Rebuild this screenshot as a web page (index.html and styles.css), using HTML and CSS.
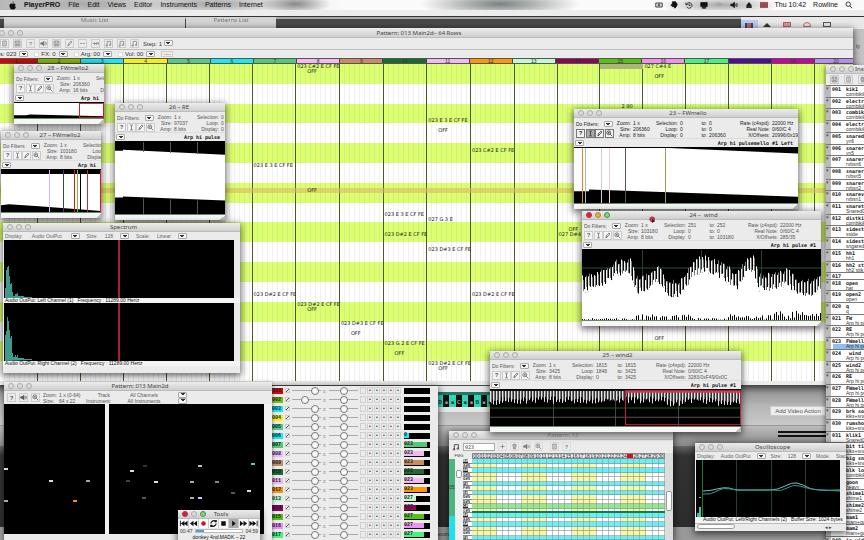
FILE: index.html
```html
<!DOCTYPE html>
<html lang="en">
<head>
<meta charset="utf-8">
<title>PlayerPRO</title>
<link rel="stylesheet" href="styles.css">
</head>
<body>
<svg class="defs" aria-hidden="true">
  <symbol id="i-text" viewBox="0 0 10 10"><path d="M3 1.5h1.5L5 2l.5-.5H7M5 2v6M3 8.500h1.500L5 8l.5.5H7"/></symbol>
  <symbol id="i-pen" viewBox="0 0 10 10"><path d="M2.500 8.500l1-3 3.500-4 1.500 1.200-3.500 4zM3.500 5.500L5 6.700"/></symbol>
  <symbol id="i-zoom" viewBox="0 0 10 10"><circle cx="4" cy="4" r="2.800"/><path d="M6 6l3 3M2.700 4h2.600M4 2.700v2.600"/></symbol>
  <symbol id="i-spk" viewBox="0 0 10 10"><path fill="currentColor" d="M1 4h2l2.500-2.500v7L3 6H1z"/><path d="M7 3.500q1 1.500 0 3M8.300 2.500q1.600 2.500 0 5"/></symbol>
  <symbol id="i-disk" viewBox="0 0 10 10"><path d="M1.500 1.500h7v7h-7zM3 1.500v3h4v-3M3 8.500v-2h4v2"/></symbol>
  <symbol id="i-page" viewBox="0 0 10 10"><path d="M2.500 1.500h5v7h-5zM4 4h2M4 6h2"/></symbol>
  <symbol id="i-trash" viewBox="0 0 10 10"><path d="M2 3h6M4 3V1.500h2V3M3 3l.5 5.500h3L7 3M5 4.500v3"/></symbol>
  <symbol id="i-dash" viewBox="0 0 10 10"><path d="M1.500 5h3M5.500 5h3"/></symbol>
  <symbol id="i-fwd" viewBox="0 0 10 10"><path d="M1 5h7M3 3l2 2-2 2M6 3l2 2-2 2M9 3v4"/></symbol>
  <symbol id="i-note" viewBox="0 0 10 10"><path d="M3 8V2h5v5"/><circle cx="2.500" cy="8" r="1"/><circle cx="7.300" cy="7" r="1"/></symbol>
  <symbol id="i-plus" viewBox="0 0 10 10"><path d="M5 2v6M2 5h6"/></symbol>
  <symbol id="i-loop" viewBox="0 0 10 10"><path d="M8 3a3.500 3.500 0 0 0-6 2M2 7a3.500 3.500 0 0 0 6-2M8 1v2H6M2 9V7h2"/></symbol>
</svg>

<div class="desktop">
  <header class="menubar">
    <nav>
      <svg class="apple" viewBox="0 0 10 10"><path d="M6.500.3Q6.500 2 5 2.200 5 .8 6.500.3zM8.500 3.500Q7 2.300 5.200 3 3.500 2.200 2 3.500.8 5.500 2.500 8.300 3.500 9.900 5.200 9.100 7 9.900 8 8.300L8.800 7Q6.800 5.500 8.500 3.500z"/></svg>
      <button class="app">PlayerPRO</button><button>File</button><button>Edit</button><button>Views</button><button>Editor</button><button>Instruments</button><button>Patterns</button><button>Internet</button>
    </nav>
    <div class="status">
      <svg viewBox="0 0 10 10"><path d="M1 2.500h8v5H1z"/><circle cx="5" cy="5" r="1.300"/></svg>
      <svg viewBox="0 0 10 10"><path fill="currentColor" d="M3 1h4l2 3-1 3-2 2-1-2H3L1 5l2-1z"/></svg>
      <svg viewBox="0 0 10 10"><path d="M2 4a3.500 3.500 0 1 1 0 3M1 2v2.500h2.500M5 3v2.500h2"/></svg>
      <svg viewBox="0 0 10 10"><path fill="currentColor" d="M1 2h8v5H1zM3 8h4v1H3z"/></svg>
      <svg viewBox="0 0 10 10" class="faint"><path d="M1 4q4-3 8 0M3 6q2-2 4 0"/></svg>
      <svg viewBox="0 0 10 10"><use href="#i-spk"/></svg>
      <svg viewBox="0 0 10 10"><path fill="currentColor" d="M2 5.500L5 2l3 3.500zM2 7h6v1H2z"/></svg>
      <svg viewBox="0 0 10 10" class="flag"><rect y="2" width="10" height="6" fill="#667"/><path d="M0 5h10M5 2v6"/></svg>
      <span>Thu 10:42</span><span>Rowline</span>
      <svg viewBox="0 0 10 10"><circle cx="4" cy="4" r="2.800"/><path d="M6 6l3 3"/></svg>
    </div>
  </header>

  <div class="editor-top">
    <section class="stub music"><h2>Music List</h2></section>
    <section class="stub patterns"><h2>Patterns List</h2></section>
    <div class="modes"><span class="on"><i class="film"></i></span><i class="tri"></i><i class="card"></i><i class="ring"></i><i class="export"></i></div>
  </div>
  <div class="editor-side">ty</div>

  <section class="editor-bottom">
    <div class="band"></div>
    <div class="row"><button>Add Video Action</button></div>
    <div class="lines"><i></i><i></i></div>
    <div class="dark"></div>
    <div class="foot">ecord</div>
  </section>

  <section class="win main">
    <header class="bar"><span class="dots"><i></i><i></i><i></i></span><h2>Pattern: 013 Main2d– 64 Rows</h2></header>
    <div class="tools" id="mainTools"></div>
    <div class="fields">
      <label>s: 023 <select></select></label>
      <label><input type="checkbox">FX: 0 <select></select></label>
      <label><input type="checkbox">Arg: 00 <select></select></label>
      <label><input type="checkbox">Vol: 00 <select></select></label>
      <button class="erase">—</button>
    </div>
    <div class="sheet">
      <div class="heads" id="heads"></div>
      <div class="cells" id="cells"></div>
    </div>
  </section>

  <section class="keys" id="keys"></section>
  <section class="win mixer" id="mixer"></section>
  <div id="samples"></div>

  <section class="win spectrum">
    <header class="bar"><span class="dots"><i></i><i></i><i></i></span><h2>Spectrum</h2></header>
    <div class="opts"><label>Display: <b>Audio OutPut</b><select></select></label><label>Size: <b>128</b><select></select></label><label>Scale: <b>Linear</b><select></select></label></div>
    <svg class="scope" viewBox="0 0 230 58" preserveAspectRatio="none"><path fill="#3f9a8e" d="M1 58V48h1V30h1V27h1v-1h1v10h1v8h1v-1h1v9h1v4h2v-2h2v-1h1v3h6v1h8v1z"/><path stroke="#a82038" stroke-width="2" d="M115 0v58"/></svg>
    <p>Audio OutPut: Left Channel (1) &nbsp; Frequency : 11289.00 Hertz</p>
    <svg class="scope" viewBox="0 0 230 58" preserveAspectRatio="none"><path fill="#3f9a8e" d="M1 58V32h1v-4h1V14h1v4h1v9h1v8h1v-2h1v17h1v4h2v-2h1v2h1v-2h1v3h6v1h8v1z"/><path stroke="#a82038" stroke-width="2" d="M115 0v58"/></svg>
    <p>Audio OutPut: Right Channel (2) &nbsp; Frequency : 11289.00 Hertz</p>
  </section>

  <section class="win roll">
    <header class="bar"><span class="dots"><i></i><i></i><i></i></span><h2>Pattern: 013 Main2d</h2></header>
    <div class="rolltools">
      <button>?</button><button><svg><use href="#i-spk"/></svg></button><button><svg><use href="#i-zoom"/></svg></button>
      <dl><dt>Zoom:</dt><dd>1 x (0-64)</dd><dt>Size:</dt><dd>64 x 22</dd></dl>
      <div class="picks"><label for="trk">Track</label><span>All Channels</span><select id="trk"></select><label for="ins">Instrument:</label><span>All Instruments</span><select id="ins"></select></div>
    </div>
    <div class="panes"><svg id="paneA"></svg><svg id="paneB"></svg></div>
  </section>

  <section class="win transport">
    <header class="bar"><span class="dots live"><i></i><i></i><i></i></span><h2>Tools</h2></header>
    <div class="keysrow">
      <button><svg viewBox="0 0 10 10"><path fill="currentColor" d="M1 2v6h1V2zM6 2L2 5l4 3zM9.500 2l-4 3 4 3z"/></svg></button>
      <button><svg viewBox="0 0 10 10"><path fill="currentColor" d="M5 2L1 5l4 3zM9 2L5 5l4 3z"/></svg></button>
      <button><svg viewBox="0 0 10 10"><circle cx="5" cy="5" r="2.500" fill="#d01030" stroke="none"/></svg></button>
      <button><svg viewBox="0 0 10 10" class="heavy"><use href="#i-loop"/></svg></button>
      <button><svg viewBox="0 0 10 10"><path fill="currentColor" d="M2.500 2.500h5v5h-5z"/></svg></button>
      <button class="down"><svg viewBox="0 0 10 10"><path fill="currentColor" d="M3.500 2l4 3-4 3z"/></svg></button>
      <button><svg viewBox="0 0 10 10"><path fill="currentColor" d="M1 2l4 3-4 3zM5 2l4 3-4 3z"/></svg></button>
      <button><svg viewBox="0 0 10 10"><path fill="currentColor" d="M.500 2l4 3-4 3zM4 2l4 3-4 3zM8.500 2v6h1V2z"/></svg></button>
    </div>
    <div class="time"><span>00:47</span><progress value="17" max="100"></progress><span>04:59</span></div>
    <p>donkey 4nd.MADK – 22</p>
  </section>

  <section class="win steps">
    <header class="bar"><span class="dots"><i></i><i></i><i></i></span><h2>Pattern: 13</h2></header>
    <div class="steptools">
      <svg><use href="#i-note"/></svg><input type="text" value="023" aria-label="Instrument">
      <button><svg><use href="#i-plus"/></svg></button><button><svg><use href="#i-trash"/></svg></button><button><svg><use href="#i-spk"/></svg></button><button><svg><use href="#i-zoom"/></svg></button>
      <button class="gap"><svg><use href="#i-page"/></svg></button><button>?</button>
    </div>
    <div class="stepbody">
      <div class="track"><b>05</b><b></b></div>
      <div class="scroller"><small>FMG</small><i></i></div>
      <div class="piano" id="piano"></div>
      <div class="stepgrid"><div class="nums" id="nums"></div><div class="steprows" id="steprows"></div></div>
      <div class="scroller right"><i></i></div>
    </div>
  </section>
  <div id="front"></div>

  <section class="win insts">
    <header class="bar"><span class="dots"><i></i><i></i><i></i></span><h2>Instruments</h2></header>
    <div class="instools"><button><svg><use href="#i-disk"/></svg></button><button><svg><use href="#i-page"/></svg></button><button><svg><use href="#i-trash"/></svg></button></div>
    <ul id="insts"></ul>
  </section>

  <section class="win osc">
    <header class="bar"><span class="dots"><i></i><i></i><i></i></span><h2>Oscilloscope</h2></header>
    <div class="opts"><label>Display: <b>Audio OutPut</b><select></select></label><label>Size: <b>128</b><select></select></label><label>Mode: <b>Stack</b></label></div>
    <svg class="scope" viewBox="0 0 144 57" preserveAspectRatio="none">
      <path stroke="#2a3c3a" d="M40.500 0v57M75.500 0v57M109.500 0v57"/><path stroke="#1b7a30" d="M6.500 0v57"/>
      <path fill="#2fd0a8" d="M1 57v-4h2v-6h2v10zM3 37h2v1H3z"/>
      <path fill="none" stroke="#8ab8b4" d="M7 31q7 0 14-2t12-1q5 2 11 2h30q8 0 15-4t12-3q7 2 12 5t31 2"/>
      <path fill="none" stroke="#2b9a90" d="M7 34q8 1 14-3t14-2q6 2 14 1h28q8 2 14-2t13-2q6 2 12 3t28 2"/>
    </svg>
    <p>Audio OutPut: Left/Right Channels (2) &nbsp; Buffer Size: 1024 bytes</p>
    <div class="hscroll"><i></i><span>◂ ▸</span></div>
  </section>
  <svg class="cursor" viewBox="0 0 10 10"><circle cx="4" cy="4" r="3.500" fill="#c83050"/><path d="M4 3v6l1.500-1.500h2z"/></svg>
</div>
<script src="app.js"></script>
</body>
</html>
```
FILE: styles.css
```css
* { box-sizing: border-box; margin: 0; padding: 0; }
html, body { height: 100%; }
body { font: 5px/6px "Liberation Sans", sans-serif; color: #333; overflow: hidden; }
button, input, select { font: inherit; color: inherit; border: 0; background: none; appearance: none; }
h2 { font: 6px/8px "Noto Sans", sans-serif; color: #444; white-space: nowrap; }
ul { list-style: none; }
svg { fill: none; stroke: currentColor; display: block; }
.defs { position: absolute; width: 0; height: 0; }
.desktop { position: relative; height: 100vh; overflow: hidden; background: #555; }

.menubar { display: flex; justify-content: space-between; height: 16px; padding: 0 11px 0 7px; font-size: 7px; line-height: 10px; color: #111;
  background: radial-gradient(ellipse 70px 9px at 90px 4px, #9a9a9aaa, #0000), radial-gradient(ellipse 75px 9px at 215px 4px, #999999cc, #0000), radial-gradient(ellipse 36px 10px at 295px 4px, #888, #0000), radial-gradient(ellipse 80px 13px at 500px 4px, #7c8080, #0000), radial-gradient(ellipse 60px 9px at 720px 5px, #aaa, #0000), linear-gradient(90deg, #b8b8b8, #d8d8d8 20%, #fafafa 40%); border-bottom: 6px solid #ececec; }
.menubar nav, .status { display: flex; align-items: center; height: 10px; }
.menubar nav { gap: 8px; }
.menubar nav button { height: 10px; }
.apple { width: 9px; height: 9px; fill: #111; stroke: none; margin-left: 1px; margin-right: -1px; }
.app { font-weight: bold; }
.status { gap: 7px; }
.status svg { width: 8px; height: 8px; }
.status .faint { color: #999; }
.status .flag { color: #c33; }

.editor-top { position: absolute; inset: 16px 0 auto; display: flex; height: 13px; padding-left: 4px; gap: 1px; background: #484848; border-top: 1px solid #333; box-shadow: inset 0 2px #aaa; }
.stub { height: 13px; background: #d4d4d4; text-align: center; overflow: hidden; }
.stub h2 { line-height: 7px; color: #777; }
.music { width: 181px; }
.patterns { width: 90px; }
.modes { margin-left: auto; width: 123px; display: flex; align-items: center; gap: 12px; background: #e8e8e8; padding-top: 3px; color: #556; }
.modes .on { background: #b5cdf0; width: 17px; height: 10px; padding: 3px 4px; }
.modes i { display: block; width: 8px; height: 5px; }
.film { border: solid #446; border-width: 0 2px; background: #b66; }
.tri { border: 4px solid transparent; border-bottom-color: #333; border-top: 0; margin-left: -7px; }
.card { background: #d99; border: 1px solid #a66; }
.ring { border: 1px solid #b66; border-radius: 4px 4px 0 0; }
.export { border: 1px solid #555; }
.editor-side { position: absolute; top: 29px; right: 0; width: 11px; height: 40px; padding: 14px 3px; background: #c4c4c4; }

.editor-bottom { position: absolute; inset: 380px 0 0; display: flex; flex-direction: column; background: #aaa; }
.band { height: 24px; background: linear-gradient(#777, #999 50%, #b0b0b0); }
.editor-bottom .row { height: 22px; padding: 2px 38px; text-align: right; background: linear-gradient(#b4b4b4, #c9c9c9); border-bottom: 1px solid #999; }
.editor-bottom button { background: #eee; border: 1px solid #ccc; width: 56px; height: 10px; font-size: 6px; color: #555; white-space: nowrap; }
.lines { height: 20px; padding: 5px 38px; display: flex; flex-direction: column; align-items: flex-end; gap: 2px; background: linear-gradient(#bbb, #888); }
.lines i { width: 48px; height: 2px; background: #111; }
.dark { flex: 1; background: linear-gradient(#666, #333 12%, #2d2d2d); }
.foot { height: 13px; padding: 4px 438px; background: #999; }

.win { position: absolute; display: flex; flex-direction: column; overflow: hidden; background: #ebebeb; box-shadow: 0 2px 7px 1px #0009; white-space: nowrap; }
.bar { display: flex; flex: none; align-items: center; height: 9px; padding: 0 4px; background: linear-gradient(#ececec, #cfcfcf); border-bottom: 1px solid #bbb; }
.bar h2 { flex: 1; text-align: center; margin-right: 22px; overflow: hidden; }
.dots { display: flex; gap: 3px; width: 26px; }
.dots i { width: 6px; height: 6px; border: 1px solid #aaa; border-radius: 3px; background: #ddd; }
.live i:first-child { background: #d23; border-color: #a34; }
.live i:last-child { background: #7d6; border-color: #585; }
.warm i:nth-child(2) { background: #ea4; border-color: #a83; }
select { flex: none; width: 9px; height: 6px; border: 1px solid #aaa; border-radius: 1px; background: #f5f5f5 conic-gradient(from -45deg at 50% 75%, #333 90deg, #0000 0) center / 4px 3px no-repeat; }
.win button svg { width: 7px; height: 7px; }

.main { left: -5px; right: 11px; top: 28px; height: 357px; }
.main .bar { height: 10px; }
.main .bar h2 { margin-right: 36px; }
.tools { display: flex; align-items: center; gap: 4px; height: 12px; padding-left: 5px; border-bottom: 1px solid #bbb; font-size: 6px; }
.tools button { width: 9px; height: 9px; border: 1px solid #ccc; color: #777; display: grid; place-items: center; }
.fields { display: flex; align-items: center; height: 8px; padding-left: 5px; font-size: 6px; gap: 6px; }
.fields label { display: flex; align-items: center; gap: 3px; }
.fields input { width: 5px; height: 5px; background: #fff; border: 1px solid #ddd; margin-right: -1px; }
.erase { width: 12px; height: 6px; border: 1px solid #ccc; line-height: 4px; color: #c44; }
.sheet { width: calc(100% + 5px); }
.heads, .cells { display: grid; grid-template-columns: repeat(20, 1fr); }
.heads { border-top: 1px solid #555; border-bottom: 1px solid #555; }
.heads span { height: 4px; line-height: 4px; font-size: 5px; text-align: center; border-right: 1px solid #444; }
.cells { grid-template-rows: repeat(64, 1fr); height: 317px; font: 5px/5px "DejaVu Sans", sans-serif; color: #222;
  background: repeating-linear-gradient(#dcff70 0 6.25%, #fff 6.25% 12.5%); }
.cells .col { grid-row: 1 / -1; border-right: 1px solid #4a5a30; background: repeating-linear-gradient(90deg, #0000 0 4px, #7773a01c 4px 5px); }
.cells .play { grid-column: 1 / -1; grid-row: 26; background: #e0b86499; }
.cells .sel { grid-column: 15; grid-row: 1; background: #aab67a; }
.cells span { padding-left: 1px; overflow: visible; }
.cells .off { padding-left: 11px; }

.keys { position: absolute; left: 437px; top: 386px; width: 56px; height: 26px; padding: 6px 0 5px; background: #e6e6e6; display: flex; color: #043; font-weight: bold; }
.keys i { flex: 1; font-style: normal; line-height: 15px; text-align: center; background: #111; color: #999; border-top: 3px solid #276; }
.keys i:nth-child(odd) { background: #32d6b4; color: #033; }

.mixer { left: 265px; top: 386px; width: 173px; height: 170px; padding-left: 7px; }
.mixer .ch { display: flex; align-items: center; flex: none; height: 9px; gap: 2px; }
.mixer .id { width: 11px; height: 6px; font: bold 5px/6px "Liberation Mono", monospace; color: #123; }
.mixer input[type=checkbox] { width: 5px; height: 5px; border: 1px solid #ccc; background: linear-gradient(135deg, #0000 45%, #555 45% 60%, #0000 60%); }
.mixer input[type=range] { width: 29px; height: 8px; background: linear-gradient(#aaa, #aaa) center / 100% 1px no-repeat; }
.mixer input[type=range]::-webkit-slider-thumb { appearance: none; width: 8px; height: 8px; border-radius: 4px; border: 1px solid #777; background: #f8f8f8; }
.mixer .pan { color: #888; width: 4px; }
.mixer .fx { display: flex; gap: 1px; width: 42px; }
.mixer .fx b { width: 6px; height: 7px; border: 1px solid #d0d0d0; line-height: 5px; text-align: center; font-weight: bold; }
.mixer .vu { width: 26px; height: 6px; background: #000; }
.mixer .vu span { display: block; height: 5px; font: bold 5px/5px "Liberation Mono", monospace; color: #222; }

.info { display: grid; grid-template-columns: 38px 15px 18px 25px 18px 7px 20px 39px 40px; column-gap: 2px; padding: 2px 2px 0; height: 20px; color: #555; overflow: hidden; flex: none; line-height: 6px; }
.info > span:nth-of-type(odd) { text-align: right; display: flex; justify-content: flex-end; }
.filters { grid-row: 1 / 4; display: flex; flex-wrap: wrap; align-items: center; justify-content: space-between; width: 38px; height: 18px; }
.filters label { display: flex; gap: 5px; width: 100%; align-items: center; height: 7px; }
.filters button { width: 9px; height: 9px; border: 1px solid #ccc; background: #f4f4f4; font: bold 6px/7px "Liberation Sans", sans-serif; }
.w23 .info { color: #222; }
.w23 .filters button { border-color: #777; }
.w23 .filters button:nth-of-type(2) { background: #aaa; }
.name { display: flex; align-items: center; justify-content: space-between; height: 9px; flex: none; padding: 0 5px 0 1px; font: bold 5px/8px "DejaVu Sans Mono", monospace; color: #111; border-top: 1px solid #ddd; }
.wave { width: 100%; flex: 1; min-height: 0; background: #fff; border-top: 1px solid #000; stroke: none; }
.grow { height: 6px; flex: none; background: linear-gradient(135deg, #0000 50%, #bbb 50%) right / 5px 5px no-repeat #f6f6f6; border-top: 1px solid #686; }
.w28 { left: 14px; top: 64px; width: 90px; height: 60px; }
.w27 { left: 1px; top: 131px; width: 100px; height: 87px; }
.w26 { left: 115px; top: 103px; width: 110px; height: 117px; }
.w23 { left: 574px; top: 109px; width: 224px; height: 100px; }
.w24 { left: 582px; top: 211px; width: 239px; height: 115px; }
.w25 { left: 490px; top: 351px; width: 251px; height: 81px; }
.w26 .bar h2, .w27 .bar h2, .w28 .bar h2 { margin-right: 8px; }

.spectrum { left: 3px; top: 223px; width: 237px; height: 150px; }
.spectrum .scope { width: calc(100% - 7px); height: 58px; }
.opts { display: flex; gap: 7px; height: 8px; flex: none; align-items: center; padding: 0 2px; color: #666; overflow: hidden; }
.opts label { display: flex; align-items: center; gap: 7px; }
.opts b { font-weight: normal; }
.spectrum label:first-child { gap: 9px; }
.scope { background: #000; flex: none; margin-left: 1px; stroke: none; }
.spectrum p, .osc p { height: 5px; line-height: 5px; padding-left: 2px; color: #111; background: #f4f4f4; }

.roll { left: 4px; top: 382px; width: 268px; height: 158px; box-shadow: 0 1px 4px #0008; }
.rolltools { display: flex; align-items: center; gap: 3px; height: 13px; padding-left: 3px; color: #555; }
.rolltools button { width: 9px; height: 9px; border: 1px solid #ccc; display: grid; place-items: center; font-weight: bold; font-size: 6px; }
.rolltools dl { display: grid; grid-template-columns: 16px 24px; }
.picks { display: grid; grid-template-columns: 24px 56px 9px; column-gap: 6px; align-items: center; }
.picks label { text-align: right; }
.picks span { text-align: center; }
.panes { display: flex; gap: 4px; height: 130px; padding-right: 8px; background: #f2f2f2; }
.panes svg { background: #000; height: 130px; stroke: none; }
#paneA { width: 101px; }
#paneB { flex: 1; }

.transport { left: 178px; top: 510px; width: 82px; height: 32px; }
.keysrow { display: flex; height: 9px; padding: 0 1px; color: #111; }
.keysrow button { flex: 1; display: grid; place-items: center; border-right: 1px solid #ccc; background: #fafafa; }
.win .keysrow svg { width: 9px; height: 9px; stroke: none; }
.win .keysrow .heavy { stroke: #111; stroke-width: 1.300; }
.win .keysrow .down { background: #aaa; }
.time { display: flex; justify-content: space-between; padding: 0 2px; height: 6px; align-items: center; }
progress { appearance: none; width: 48px; height: 4px; border: 1px solid #bbb; }
progress::-webkit-progress-bar { background: #fff; }
progress::-webkit-progress-value { background: #4aa0d8; }
.transport p { text-align: center; font-size: 5px; color: #111; }

.steps { left: 449px; top: 431px; width: 224px; height: 109px; }
.steps h2 { color: #999; }
.steptools { display: flex; align-items: center; gap: 3px; height: 13px; padding-left: 3px; flex: none; }
.steptools > svg { width: 8px; height: 8px; }
.steptools input { width: 32px; height: 8px; border: 1px solid #aaa; background: #fff; padding-left: 1px; font-family: "DejaVu Sans Mono", monospace; }
.steptools button { width: 9px; height: 9px; border: 1px solid #ddd; color: #777; display: grid; place-items: center; font-weight: bold; }
.steptools .gap { margin-left: 4px; }
.stepbody { display: flex; flex: 1; min-height: 0; }
.track { width: 6px; display: flex; flex-direction: column; padding-top: 6px; }
.track b { height: 57px; background: #4cb480; font-weight: normal; line-height: 57px; }
.track b + b { flex: 1; background: #20e0e8; }
.scroller { width: 8px; background: #f0f0f0; display: flex; flex-direction: column; align-items: center; }
.scroller small { font-size: 4px; height: 17px; }
.scroller i { width: 6px; height: 8px; border: 1px solid #999; border-radius: 2px; background: #fff; }
.right { margin-left: auto; background: #ddd; }
.right i { margin-top: 38px; height: 20px; }
.piano { width: 9px; padding-top: 6px; display: grid; grid-template-rows: repeat(18, 1fr); font: bold 4px/4px "DejaVu Sans Mono", monospace; }
.piano span { background: #fff; border-bottom: 1px solid #888; overflow: hidden; }
.piano .black { background: linear-gradient(90deg, #222 60%, #fff 60%); color: #fff; }
.stepgrid { flex: 1; display: flex; flex-direction: column; }
.nums { display: grid; grid-template-columns: repeat(31, 1fr); height: 6px; font-size: 5px; overflow: hidden; color: #222; text-align: center; border: 1px solid #888; line-height: 5px; }
.nums .now { background: #d01020; color: #d01020; }
.steprows { flex: 1; display: grid; grid-template-rows: repeat(18, 1fr);
  background: repeating-linear-gradient(90deg, #fbf6a0 0 12.900%, #fff 12.900% 25.800%); }
.steprows i { border-bottom: 1px solid #7a909099; background: repeating-linear-gradient(90deg, #0000 0 calc(3.226% - 1px), #8a9a9a99 calc(3.226% - 1px) 3.226%); }
.steprows .c { background-color: #68f0f4; }
.steprows .g { background-color: #94e88c; }
.steprows .d { border-bottom: 2px solid #108040; }

.osc { left: 695px; top: 443px; width: 151px; height: 88px; }
.osc .scope { width: calc(100% - 7px); height: 57px; }
.osc .opts { gap: 5px; }
.osc .opts label { gap: 6px; }
.osc p { padding-left: 8px; height: 6px; }
.hscroll { display: flex; justify-content: space-between; height: 6px; padding: 0 14px 0 2px; border-top: 1px solid #bbb; }
.hscroll i { width: 38px; border: 1px solid #999; border-radius: 3px; background: #fff; }

.insts { right: 0; top: 65px; bottom: -8px; width: 38px; box-shadow: -1px 1px 5px #0007; }
.insts .bar { padding-right: 0; }
.insts .bar h2 { margin: 0; text-align: left; margin-left: 1px; flex: none; }
.instools { height: 11px; display: flex; align-items: center; padding-left: 4px; gap: 5px; flex: none; }
.instools button { width: 9px; height: 9px; color: #777; border: 1px solid #ccc; }
.insts ul { flex: 1; display: flex; flex-direction: column; background: linear-gradient(90deg, #bbb 5px, #fff 5px); min-height: 0; }
.insts li { flex: 12 1 0; min-height: 0; display: grid; grid-template-columns: 6px 14px 1fr; align-content: start; border-top: 1px solid #777; line-height: 5px; color: #111; }
.insts li.short { flex-grow: 6; }
.insts li::before { content: "▾"; color: #555; }
.insts b { font: bold 5px/6px "DejaVu Sans Mono", monospace; }
.insts small { grid-column: 3; font-size: 5px; line-height: 5px; color: #333; }
.insts .pick small { background: #8fc0f0; margin-left: -13px; padding-left: 13px; }
.cursor { position: absolute; left: 649px; top: 215px; width: 8px; height: 10px; stroke: none; fill: #222; }
```
FILE: app.js
```js
const $ = id => document.getElementById(id);
const ico = n => `<svg><use href="#i-${n}"/></svg>`;

// Main pattern sheet
$('mainTools').innerHTML = ['page', 'disk', '?', 'spk', 'disk', 'pen', 'dash', 'fwd', 'note', 'note', 'note']
  .map(n => `<button>${n === '?' ? n : ico(n)}</button>`).join('') + '<label>Step: 1 <select></select></label>';
const colors = ['#d40808', '#86b808', '#18e8f0', '#f4f010', '#58c888', '#18e8f0', '#54c878', '#f4b8f4', '#c88c64', '#1c6c30',
  '#f4b8f4', '#fc9808', '#c0f8d0', '#8c0458', '#58c010', '#f090f0', '#48f080', '#500c98', '#c8049c', '#b890f0'];
$('heads').innerHTML = colors.map((c, i) => `<span style="background:${c}">${i + 1}</span>`).join('');
const notes = [[8, 1, '023 C#2 E CF FE'], [8, 2], [16, 1, '027 C#4 E'], [16, 3], [15, 9, '&emsp;&emsp;&emsp;&emsp;2 90'],
  [11, 12, '023 E 3 E CF FE'], [11, 14], [12, 18, '023 C#2 E CF FE'], [7, 21, '023 E 3 E CF FE'], [8, 26],
  [10, 31, '023 E 3 E CF FE'], [11, 32, '027 G 3 E'], [14, 34], [14, 35, '027 D#4'], [10, 35, '023 D#2 E CF FE'],
  [11, 38, '023 D#3 E CF FE'], [7, 47, '023 D#2 E CF FE'], [12, 47, '023 D#2 E CF FE'], [8, 49, '023 D#2 E CF FE'], [8, 50],
  [9, 53, '023 D#3 E CF FE'], [9, 55], [16, 56], [10, 57, '023 G 2 E CF FE'], [10, 59], [11, 61, '023 D#2 E CF FE'], [11, 62]];
$('cells').innerHTML = colors.map((c, i) => `<i class="col" style="grid-column:${i + 1}"></i>`).join('') +
  '<i class="play"></i><i class="sel"></i>' +
  notes.map(([c, r, t]) => `<span class="${t ? '' : 'off'}" style="grid-area:${r}/${c}">${t || 'OFF'}</span>`).join('');

$('keys').innerHTML = [...'D■■C■■B■■'].map(k => `<i>${k}</i>`).join('');

// Mixer channels
const vu = { 6: 20, 7: 90, 8: 78, 9: 78, 10: 78, 11: 78, 12: 88, 13: 45, 14: 45, 15: 78, 16: 78, 17: 78 };
$('mixer').innerHTML = colors.slice(0, 17).map((c, i) => {
  const n = i + 1, id = String(n).padStart(3, '0');
  return `<div class="ch"><span class="id" style="background:${c}">${id}</span><input type="checkbox" aria-label="On">
  <input type="range" aria-label="Volume" value="${n === 2 ? 45 : 92}"><span class="pan">≡</span><input type="range" aria-label="Pan" value="52">
  <span class="fx"><b></b><b>•</b><b>•</b><b>•</b><b>•</b><b>•</b></span>
  <span class="vu">${vu[n] ? `<span style="background:${c};width:${vu[n]}%">${n < 7 ? '0' : n < 13 ? '023' : '027'}</span>` : ''}</span></div>`;
}).join('');

// Waveforms
const noise = i => Math.abs(Math.sin(i * 12.9898) * 43758.5) % 1;
const lerp = (pts, x) => {
  const k = pts.findIndex(p => p[0] >= x);
  if (k < 1) return pts[0][1];
  const [a, b] = [pts[k - 1], pts[k]];
  return a[1] + (b[1] - a[1]) * (x - a[0]) / (b[0] - a[0]);
};
const v = (x, c, w = 1, h = 100) => `<rect x="${x}" width="${w}" height="${h}" fill="${c}"/>`;
function windWave() {
  const env = [[0, 26], [20, 18], [34, 9], [48, 8], [54, 26], [62, 26], [75, 14], [86, 30], [96, 30], [104, 20], [112, 7], [125, 5], [140, 12],
    [155, 22], [165, 6], [171, 4], [177, 24], [195, 22], [205, 18], [215, 28], [230, 30], [239, 22]];
  let s = '<rect width="239" height="72"/>' + v(60, '#243') + v(119, '#243') + v(179, '#243') + '<path fill="#253" d="M0 18h239v1H0z"/>';
  for (let x = 0; x < 239; x++) {
    const top = lerp(env, x), tip = top + noise(x) * 6, base = top + 12 + noise(x + 7) * 7;
    s += `<rect x="${x}" y="${base}" width="1" height="${72 - base}" fill="#fff"/>`;
    if (x % 3 < 2) s += `<rect x="${x}" y="${tip}" width="1" height="${base - tip}" fill="${x % 3 ? '#777' : '#f4f4f4'}"/>`;
  }
  for (let x = 0; x < 239; x += 2) {
    const h = (x > 190 ? 11 : x > 50 && x < 110 || x > 140 ? 6 : 2) * noise(x + 3);
    s += `<rect x="${x}" y="${72 - h}" width="1" height="${h}"/>`;
  }
  return s;
}
function wind2Wave() {
  let s = '<rect width="251" height="39"/>' + v(63, '#444') + v(125, '#444') + v(188, '#444') + '<path fill="#175c17" d="M0 19h251v1H0z"/><path fill="#555" d="M0 29h251v1H0z"/><path fill="#888" d="M0 1h251v5H0z"/>';
  for (let x = 0; x < 251; x++) {
    const h = 6 + 5 * noise(x) + (x % 3 ? 0 : 3) + (x > 225 || x > 175 && x < 195 ? 3 : 0) + (x < 10 ? 3 : 0);
    s += `<rect x="${x}" y="1" width="1" height="${h}" fill="${['#e4e4e4', '#777', '#333'][x % 3]}"/>`;
  }
  return s + '<path fill="#c04058" d="M136 1h115v2H136z"/><rect x="135.500" y=".5" width="115" height="37" fill="none" stroke="#d01838"/>';
}
const list = [
  { id: 28, title: '28 – FWmello2', name: 'Arp hi', size: 206360, amp: '16 bits', box: '0 0 90 17',
    wave: '<path d="M0 14h12l4-1 74 2v2H0z"/><rect x="65.500" y=".5" width="24" height="16" fill="none" stroke="#d01828"/>' },
  { id: 27, title: '27 – FWmello2', name: 'Arp hi', size: 103180, amp: '8 bits', box: '0 0 100 43',
    wave: '<path d="M0 0h100v4H0zM0 36l8-1 30 2 62 5v1H0z"/>' + v(48, '#dcb8e8') + v(62, '#346') + v(73, '#d01828') + v(76, '#5c3') + v(79, '#000') + v(86, '#c24') + v(99, '#d01828') },
  { id: 26, title: '26 – RE', name: 'Arp hi pulse', size: 97037, amp: '8 bits', box: '0 0 110 74',
    wave: '<path d="M0 0h110v13L8 8v1H0zM0 57h8v-1l102 4v14H0z"/><path fill="#555" d="M28 0h1v10h-1zM55 0h1v11h-1zM82 0h1v12h-1zM28 58h1v16h-1zM55 59h1v15h-1zM82 60h1v14h-1z"/>' },
  { id: 23, title: '23 – FWmello', name: 'Arp hi pulsemello #1 Left', size: 206360, amp: '8 bits', sel: ['0', '0', '0'], to: ['0', '0', '206360'], off: '20996/0x19', box: '0 0 224 61',
    wave: '<path d="M95 0h129v6zM0 48h15v-2l80 3 129 5v7H0z"/>' + v(8, '#f08020') + v(11, '#8ca') + v(27, '#dcc8dc') + v(35, '#ecd0d8') + v(51, '#555') + v(91, '#999c50') },
  { id: 24, title: '24 – \u00a0wind', name: 'Arp hi pulse #1', size: 103180, amp: '8 bits', sel: ['251', '0', '0'], to: ['252', '0', '103180'], off: '285/35', box: '0 0 239 72', wave: windWave(), dots: 'live warm' },
  { id: 25, title: '25 – wind2', name: 'Arp hi pulse #1', size: 3425, amp: '8 bits', sel: ['1815', '1848', '0'], to: ['1815', '3425', '3425'], off: '3283/0xF49/0x0C', box: '0 0 251 39', wave: wind2Wave(), front: true }];
const sample = s => {
  const sel = s.sel || ['0', '0', '0'], to = s.to || ['0', '0', '0'];
  const row = (...c) => c.map(t => `<span>${t}</span>`).join('');
  return `<section class="win w${s.id}"><header class="bar"><span class="dots ${s.dots || ''}"><i></i><i></i><i></i></span><h2>${s.title}</h2></header>
  <div class="info"><div class="filters"><label>Do Filters: <select></select></label><button>?</button><button>${ico('text')}</button><button>${ico('pen')}</button><button>${ico('zoom')}</button></div>
  ${row('Zoom:', '1 x', 'Selection:', sel[0], 'to:', to[0], 'Rate (c4spd):', '22000 Hz')}
  ${row('Size:', s.size, 'Loop:', sel[1], 'to:', to[1], 'Real Note:', '0/60/C 4')}
  ${row('Amp:', s.amp, 'Display:', sel[2], 'to:', to[2], 'X/Offsets:', s.off || '0')}</div>
  <div class="name"><select aria-label="Sample"></select>${s.name}</div>
  <svg class="wave" viewBox="${s.box}" preserveAspectRatio="none"><g fill="#000">${s.wave}</g></svg><div class="grow"></div></section>`;
};
$('samples').outerHTML = list.filter(s => !s.front).map(sample).join('');
$('front').outerHTML = list.filter(s => s.front).map(sample).join('');

// Piano roll notes
const dash = ([x, y, c = '#ddd']) => `<rect x="${x}" y="${y}" width="4" height="2" fill="${c}"/>`;
$('paneA').innerHTML = [[0, 64], [45, 76], [82, 76, '#aaa'], [0, 96, '#aaa'], [69, 96, '#f09020']].map(dash).join('');
$('paneB').innerHTML = [[34, 61, '#333'], [21, 66], [17, 76, '#444'], [45, 77], [33, 93, '#555'], [81, 77, '#aaa'], [89, 61, '#bbb'], [106, 77, '#888'],
  [81, 93, '#aaa'], [89, 93, '#ccf'], [122, 88, '#555'], [138, 86], [142, 59, '#6ec890']].map(dash).join('');

// Step grid
$('nums').innerHTML = Array.from({ length: 31 }, (_, i) => `<span class="${i === 25 ? 'now' : ''}">${String(i).padStart(2, '0')}</span>`).join('');
$('steprows').innerHTML = [...'cycyycycyygdcycyyc'].map(k => `<i class="${k}"></i>`).join('');
$('piano').innerHTML = [...'BAAGGFFEDDCCBAAGGF'].map((k, i) => `<span class="${'cg'.includes('cycyycycyygdcycyyc'[i]) ? 'black' : ''}">${k}#5</span>`).join('');

// Instruments
$('insts').innerHTML = `kik1|combikiks;electro|combikiks;combikik|combikiks;electro|combikiks;snaredo|yn6;snarero|yn5;snarerv|rvbsn6;snarerv|rvbsn5;snarerv|rvbsn2;snarevb|rvbsn1;snareto|Snared08;distkik|combikiks;sidestic|sside;sidest2|sngareder;hh1|hh1;hh2 stik|hh2 stik;|;open|hat;open2|open;q|q;FW|Arp hi pul;RE|Arp hi pul;FWmello|Arp hi pul;\u00a0wind|Arp hi pul;wind2|Arp hi pul;RE|Arp hi pul;FWmello|Arp hi pul;FWmello|Arp hi pul;brk sol|kiks+snar;rumshot|kiks+snar;klik1|Snared08;bit tight|kiks+snar;big snare|kiks+snar;blk loop|combikiks;goon|heavy;shime1|shime1;shime2|shime2;mam1|mam+goo;mam2|mam+goo;is vid|is`
  .split(';').map((r, i) => {
    const [a, b] = r.split('|');
    return `<li class="${a ? '' : 'short'} ${i === 22 ? 'pick' : ''}"><b>${String(i + 1).padStart(3, '0')}</b><b>${a}</b><small>${b}</small></li>`;
  }).join('');
```
